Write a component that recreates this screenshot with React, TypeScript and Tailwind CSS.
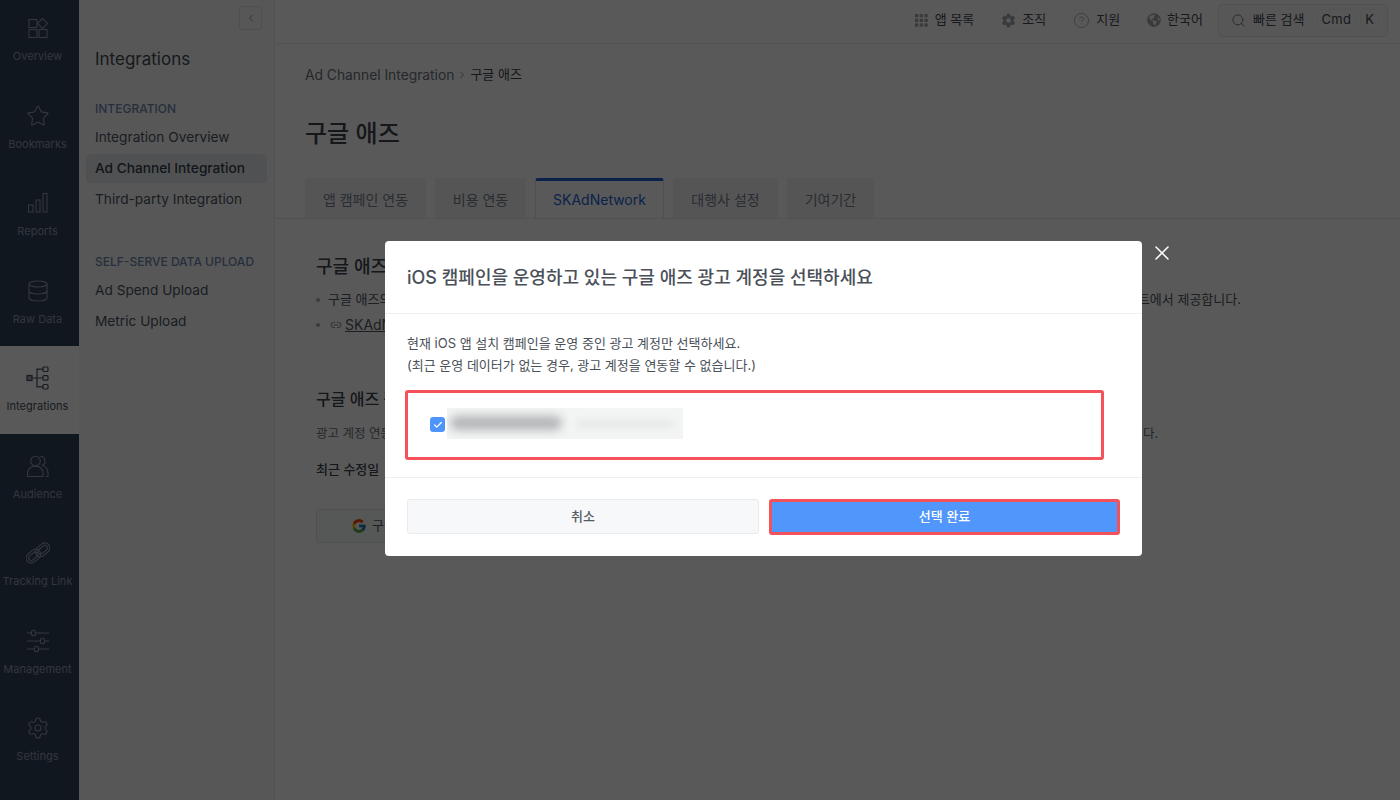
import React from "react";
import { ChevronLeft, ChevronRight, Star, Database, Settings, Search, X, Link2, Check, CircleHelp } from "lucide-react";
import { FcGoogle } from "react-icons/fc";
import { IoSettingsSharp } from "react-icons/io5";
import { FaGlobeAmericas } from "react-icons/fa";

const sw = { fill: "none", stroke: "currentColor", strokeWidth: 1.1 } as const;

function OverviewIcon() {
  return (
    <svg width="24" height="24" viewBox="0 0 24 24" {...sw}>
      <rect x="3" y="3.5" width="8" height="8" />
      <rect x="3" y="13.5" width="8" height="8" />
      <rect x="13" y="13.5" width="8" height="8" />
      <rect x="13" y="4" width="7" height="7" transform="rotate(45 16.5 7.5)" />
    </svg>
  );
}
function ReportsIcon() {
  return (
    <svg width="24" height="24" viewBox="0 0 24 24" {...sw}>
      <rect x="2.5" y="14" width="4.5" height="7" />
      <rect x="10" y="9" width="4" height="12" />
      <rect x="17" y="2.5" width="4" height="18.5" />
    </svg>
  );
}
function HierarchyIcon() {
  return (
    <svg width="24" height="24" viewBox="0 0 24 24" fill="none" stroke="currentColor" strokeWidth="1.2">
      <rect x="1" y="9.5" width="5" height="5" fill="currentColor" fillOpacity="0.5" />
      <rect x="17" y="1" width="5" height="4.5" rx="1" />
      <rect x="17" y="9.7" width="5" height="4.5" rx="1" />
      <rect x="17" y="18.5" width="5" height="4.5" rx="1" />
      <path d="M6 12h11M11 12V3.2h6M11 12v8.8h6" />
    </svg>
  );
}
function AudienceIcon() {
  return (
    <svg width="24" height="24" viewBox="0 0 24 24" {...sw}>
      <circle cx="9.5" cy="7" r="4.8" />
      <path d="M1.5 22.5v-3c0-3.5 3-6 5-7h6c2 1 4.5 3.5 4.5 7v3z" />
      <path d="M14 2.3a4.8 4.8 0 0 1 2.5 9c2.5 1 5.5 3.5 5.5 7.5v3.7h-2.2" />
    </svg>
  );
}
function ChainIcon() {
  return (
    <svg width="24" height="24" viewBox="0 0 24 24" {...sw}>
      <g transform="rotate(-40 12 12)">
        <rect x="-1.5" y="6.5" width="16" height="10" rx="5" />
        <rect x="9.5" y="7.5" width="16" height="10" rx="5" />
        <rect x="1" y="9" width="10.5" height="5" rx="2.5" />
        <rect x="12.5" y="10" width="10.5" height="5" rx="2.5" />
      </g>
    </svg>
  );
}
function SlidersIcon() {
  return (
    <svg width="24" height="24" viewBox="0 0 24 24" {...sw}>
      <path d="M1 4h4.5M9.5 4H23M1 12h13.5M18.5 12H23M1 20h7.5M12.5 20H23" />
      <rect x="5.5" y="1.2" width="4" height="5.6" rx="2" />
      <rect x="14.5" y="9.2" width="4" height="5.6" rx="2" />
      <rect x="8.5" y="17.2" width="4" height="5.6" rx="2" />
    </svg>
  );
}
function DotsIcon() {
  const cells = [0, 1, 2];
  return (
    <svg width="13" height="13" viewBox="0 0 13 13" fill="currentColor" className="mr-[1px]">
      {cells.flatMap((r) => cells.map((c) => <rect key={`${r}${c}`} x={c * 4.7} y={r * 4.7} width="3.3" height="3.3" />))}
    </svg>
  );
}

const rail: { label: string; icon: React.ReactNode; active?: boolean }[] = [
  { label: "Overview", icon: <OverviewIcon /> },
  { label: "Bookmarks", icon: <Star size={24} strokeWidth={1.1} /> },
  { label: "Reports", icon: <ReportsIcon /> },
  { label: "Raw Data", icon: <Database size={24} strokeWidth={1.1} /> },
  { label: "Integrations", icon: <HierarchyIcon />, active: true },
  { label: "Audience", icon: <AudienceIcon /> },
  { label: "Tracking Link", icon: <ChainIcon /> },
  { label: "Management", icon: <SlidersIcon /> },
  { label: "Settings", icon: <Settings size={24} strokeWidth={1.1} /> },
];

function RailItem({ label, icon, active }: { label: string; icon: React.ReactNode; active?: boolean }) {
  return (
    <div
      className={`flex h-[87.5px] shrink-0 flex-col items-center justify-center gap-[7px] pt-[2px] pr-[4px] ${
        active ? "bg-white text-[#46525f]" : "text-[#919eac]"
      }`}
    >
      {icon}
      <span className="text-[11px] leading-[18px] tracking-[0.03px] whitespace-nowrap">{label}</span>
    </div>
  );
}

function NavItem({ children, active }: { children: React.ReactNode; active?: boolean }) {
  return (
    <div
      className={`-mx-[9px] flex h-[29px] items-center rounded px-[9px] text-[13.7px] ${
        active ? "bg-[#e6e9ec] font-medium text-[#33404e]" : "text-[#4a5560]"
      }`}
    >
      {children}
    </div>
  );
}

function Tab({ children, active, w }: { children: React.ReactNode; active?: boolean; w: string }) {
  return (
    <div
      className={`flex h-[40px] items-center justify-center text-[14px] ${w} ${
        active
          ? "rounded-t-[3px] border border-b-0 border-[#dfe3e8] border-t-[3px] border-t-[#1f5fd0] bg-white text-[#2563d8]"
          : "bg-[#f2f4f6] pt-[3px] text-[#77808a]"
      }`}
    >
      {children}
    </div>
  );
}

function TopItem({ icon, text }: { icon: React.ReactNode; text: string }) {
  return (
    <div className="flex items-center gap-[6px] text-[13px] text-[#444c55]">
      <span className="text-[#a0a6ad]">{icon}</span>
      {text}
    </div>
  );
}

export default function App() {
  return (
    <div className="relative flex h-[800px] w-[1400px] overflow-hidden bg-white text-[#333b44] [font-family:Inter,'Noto_Sans_CJK_KR',sans-serif]">
      <aside className="flex w-[79px] shrink-0 flex-col overflow-hidden bg-[#30425a]">
        <div className="-mt-[4px] flex flex-col">
          {rail.map((r) => (
            <RailItem key={r.label} {...r} />
          ))}
        </div>
      </aside>

      <nav className="relative w-[196px] shrink-0 border-r border-[#e9ecef] bg-[#f8fafb] px-4 pt-[48px]">
        <button className="absolute top-[6px] right-[12px] flex h-[24px] w-[23px] items-center justify-center rounded-[3px] border border-[#dde1e5] bg-[#f8fafb] text-[#8a929b]">
          <ChevronLeft size={12} />
        </button>
        <h2 className="text-[17px] leading-[23px] text-[#3f4952]">Integrations</h2>
        <div className="mt-[30px] text-[12px] leading-[16px] font-medium whitespace-nowrap text-[#6f86ad]">INTEGRATION</div>
        <div className="mt-[6px] flex flex-col gap-[2px]">
          <NavItem>Integration Overview</NavItem>
          <NavItem active>Ad Channel Integration</NavItem>
          <NavItem>Third-party Integration</NavItem>
        </div>
        <div className="mt-[40px] text-[12px] leading-[16px] font-medium whitespace-nowrap text-[#6f86ad]">SELF-SERVE DATA UPLOAD</div>
        <div className="mt-[6px] flex flex-col gap-[2px]">
          <NavItem>Ad Spend Upload</NavItem>
          <NavItem>Metric Upload</NavItem>
        </div>
      </nav>

      <main className="flex min-w-0 flex-1 flex-col">
        <header className="flex h-[44px] shrink-0 items-center justify-end gap-[27px] border-b border-[#e8ebee] pr-[12px] pb-[3px]">
          <TopItem icon={<DotsIcon />} text="앱 목록" />
          <TopItem icon={<IoSettingsSharp size={15} />} text="조직" />
          <TopItem icon={<CircleHelp size={17} strokeWidth={1.2} />} text="지원" />
          <TopItem icon={<FaGlobeAmericas size={14} />} text="한국어" />
          <div className="-ml-[12px] flex h-[33px] w-[170px] items-center rounded border border-[#e4e7ea] bg-[#f8f9fa] pl-[12px] text-[13px] text-[#444c55]">
            <Search size={15} strokeWidth={1.5} className="text-[#6d757e]" />
            <span className="ml-[7px]">빠른 검색</span>
            <span className="ml-[12px] rounded-[3px] border border-[#eef0f2] px-[4px] tracking-[0.3px]">Cmd</span>
            <span className="ml-[4px] rounded-[3px] border border-[#eef0f2] px-[4px]">K</span>
          </div>
        </header>

        <div className="flex flex-1 flex-col pt-[21px]">
          <div className="flex h-[20px] items-center pl-[30px] text-[13.8px] text-[#6a737c]">
            Ad Channel Integration
            <ChevronRight size={12} className="mx-[2px] text-[#8a929b]" />
            <span className="text-[13px] text-[#3c444d]">구글 애즈</span>
          </div>
          <h1 className="mt-[33px] pl-[30px] text-[24px] leading-[32px] font-medium text-[#3c444d]">구글 애즈</h1>
          <div className="mt-[28px] flex gap-[9px] border-b border-[#e4e7ea] pl-[30px]">
            <Tab w="w-[121px]">앱 캠페인 연동</Tab>
            <Tab w="w-[91px]">비용 연동</Tab>
            <Tab w="w-[129px]" active>SKAdNetwork</Tab>
            <Tab w="w-[105px]">대행사 설정</Tab>
            <Tab w="w-[87px]">기여기간</Tab>
          </div>

          <section className="flex w-[966px] flex-col pl-[41px]">
            <h3 className="mt-[36px] text-[18px] leading-[24px] font-medium text-[#3c444d]">구글 애즈의</h3>
            <ul className="mt-[10px] flex flex-col gap-[4px] text-[13px] text-[#4f5862]">
              <li className="flex h-[21px] items-center justify-between">
                <span className="flex items-center">
                  <span className="mr-[8px] h-[4px] w-[4px] rounded-full bg-[#a5abb2]" />
                  구글 애즈의 SKAdNetwork 캠페인 성과 데이터
                </span>
                <span>트에서 제공합니다.</span>
              </li>
              <li className="flex h-[21px] items-center">
                <span className="mr-[10px] h-[4px] w-[4px] rounded-full bg-[#a5abb2]" />
                <Link2 size={12} className="mr-[3px] text-[#7d858e]" />
                <span className="text-[14px] underline">SKAdNetwork 가이드</span>
              </li>
            </ul>
            <h3 className="mt-[52px] text-[16px] leading-[24px] font-medium text-[#3c444d]">구글 애즈 광고 계정 연동</h3>
            <p className="mt-[13px] flex h-[20px] items-center justify-between text-[12.5px] text-[#6a737c]">
              <span>광고 계정 연동을 진행해 주세요</span>
              <span className="mr-[83px]">다.</span>
            </p>
            <p className="mt-[15px] text-[13px] leading-[20px] font-medium text-[#3c444d]">최근 수정일</p>
            <button className="mt-[30px] flex h-[34px] w-[200px] items-center rounded-[3px] border border-[#e1e4e8] bg-[#f7f8fa] pl-[34px] text-[13px] text-[#4f5862]">
              <FcGoogle size={16} className="mr-[5px]" />
              구글 애즈 연동
            </button>
          </section>
        </div>
      </main>

      <div className="absolute inset-0 bg-black/65" />

      <div className="absolute top-[241px] left-[385px] flex h-[315px] w-[757px] flex-col rounded bg-white">
        <div className="flex h-[73px] shrink-0 items-center border-b border-[#edeff1] px-[22px] text-[18px] font-medium text-[#4a5058]">
          iOS 캠페인을 운영하고 있는 구글 애즈 광고 계정을 선택하세요
        </div>
        <div className="flex h-[164px] shrink-0 flex-col border-b border-[#edeff1] px-[20px] pt-[18px]">
          <p className="px-[2px] text-[13px] leading-[22px] text-[#4a5058]">
            현재 iOS 앱 설치 캠페인을 운영 중인 광고 계정만 선택하세요.
            <br />
            (최근 운영 데이터가 없는 경우, 광고 계정을 연동할 수 없습니다.)
          </p>
          <div className="mt-[14px] flex h-[70px] w-[699px] items-center rounded-[3px] border-[3px] border-[#f4525a] pl-[22px]">
            <span className="-mt-[1px] flex h-[15px] w-[15px] items-center justify-center rounded-[3px] bg-[#4f94fb]">
              <Check size={10} strokeWidth={3} className="text-white" />
            </span>
            <div className="relative -mt-[3px] ml-[2px] h-[31px] w-[236px] overflow-hidden bg-[#f3f4f4]">
              <div className="absolute top-[8px] left-[3px] h-[14px] w-[112px] rounded-full bg-[#b2b4b6] blur-[5px]" />
              <div className="absolute top-[12px] left-[130px] h-[8px] w-[96px] rounded-full bg-[#e6e8e9] blur-[3px]" />
            </div>
          </div>
        </div>
        <div className="flex flex-1 items-start gap-[10px] px-[22px] pt-[21px]">
          <button className="flex h-[35px] w-[352px] items-center justify-center rounded-[3px] border border-[#e9ebee] bg-[#f7f8fa] text-[13px] font-medium text-[#555b63]">
            취소
          </button>
          <button className="flex h-[36px] w-[351px] items-center justify-center rounded-[3px] border-[3px] border-[#f4525a] bg-[#5096fb] text-[13px] font-medium text-white">
            선택 완료
          </button>
        </div>
      </div>

      <button className="absolute top-[241px] left-[1149.5px] text-white">
        <X size={24} strokeWidth={1.5} />
      </button>
    </div>
  );
}
